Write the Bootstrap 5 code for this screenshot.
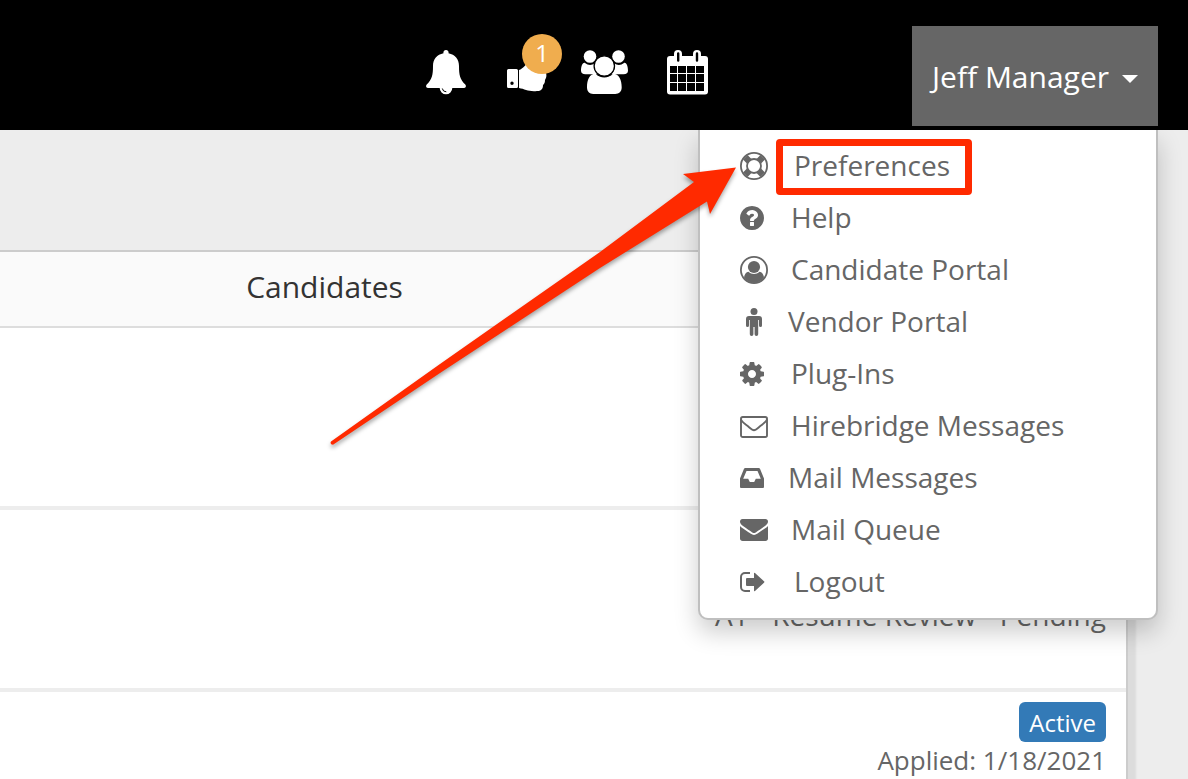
<!DOCTYPE html>
<html lang="en">
<head>
<meta charset="utf-8">
<meta name="viewport" content="width=device-width, initial-scale=1">
<title>Hirebridge</title>
<link href="https://cdn.jsdelivr.net/npm/bootstrap@5.3.0/dist/css/bootstrap.min.css" rel="stylesheet">
<style>
  body { font-family: "Open Sans", "Noto Sans", sans-serif; background: #ededed; color: #666; font-size: 26px; line-height: 37px; }
  .topbar { flex: none; background: #000; height: 130px; padding: 26px 30px 4px 0; z-index: 10; }
  .tools { gap: 32px; margin-right: 203px; }
  .tool { width: 48px; height: 48px; border: 0; background: none; padding: 0; color: #fff; display: block; position: relative; }
  .tool svg, .item-icon svg { display: block; fill: currentColor; overflow: visible; }
  .count { position: absolute; top: -16px; left: 21px; width: 40px; height: 40px; border-radius: 50%; background: #f0ad4e; color: #fff; font-size: 24px; line-height: 38px; text-align: center; }
  .user-btn { background: #666; color: #fff; border: 0; border-radius: 0; height: 100px; padding: 2px 20px 0; font-size: 30px; line-height: 40px; gap: 13px; }
  .user-btn:hover, .user-btn:focus { background: #666; color: #fff; }
  .caret { border: 8px solid transparent; border-top-color: #fff; border-bottom: 0; margin-top: 4px; }
  .user-menu { position: absolute; top: 130px; right: 30px; width: 460px; margin: 0; padding: 10px 0; border: 2px solid #bfbfbf; border-top: 0; border-radius: 0 0 10px 10px; background: #fff; box-shadow: 0 12px 24px rgba(0,0,0,.2); font-size: 28px; line-height: 40px; list-style: none; clip-path: inset(0 -60px -60px -60px); }
  .user-menu a { display: flex; align-items: center; height: 52px; padding: 0 40px; color: #666; text-decoration: none; white-space: nowrap; }
  .item-text { padding-bottom: 2px; }
  .item-icon { flex: none; width: 51px; }
  .slot-narrow { width: 48px; }
  .slot-wide { width: 54px; }
  .callout { position: relative; }
  .callout::after { content: ""; position: absolute; inset: -6px -22px -8px -18px; border: 7px solid #ff2a00; border-radius: 4px; }
  .pointer { position: absolute; top: 160px; right: 448px; width: 412px; height: 290px; fill: #ff2a00; filter: drop-shadow(0 3px 2px rgba(0,0,0,.35)); pointer-events: none; }
  .panel { flex: 1 1 0; min-height: 0; overflow: hidden; margin: 120px 60px 0 0; background: #fff; border: solid #ccc; border-width: 2px 2px 0 0; box-shadow: 8px 8px 2px #dcdcdc; }
  .grid { width: 100%; table-layout: fixed; border-collapse: separate; border-spacing: 0; }
  .grid thead > tr > * { height: 76px; background: #fafafa; border-bottom: 2px solid #ddd; color: #333; font-size: 30px; line-height: 40px; font-weight: 400; text-align: center; padding: 0 4px 4px 0; }
  .grid tbody td { height: 182px; border-bottom: 4px solid #ededed; padding: 10px 20px 0; text-align: right; vertical-align: top; }
  .grid tbody td.stage { vertical-align: bottom; padding-bottom: 54px; font-size: 28px; }
  .name-col { width: 58%; }
  .status { display: block; width: fit-content; margin-left: auto; background: #337ab7; color: #fff; border-radius: 6px; padding: 2px 10px 0; font-size: 24px; line-height: 38px; }
</style>
</head>
<body class="vh-100 overflow-hidden d-flex flex-column">
<header class="topbar d-flex justify-content-end align-items-start position-relative">
  <nav class="tools d-flex align-items-center pt-4" aria-label="Tools">
    <button class="tool" type="button" aria-label="Notifications">
      <svg width="48" height="48" viewBox="0 0 48 48"><path d="M25 0a2.500 2.500 0 0 1 2.500 3.200C34 4.500 38 9 38 16c0 9 1 13.500 6.300 18.500 1.300 1.500.7 3.500-1.600 3.500H31.300a6.300 6.300 0 0 1-12.600 0H7.300c-2.300 0-2.900-2-1.600-3.500C11 29.500 12 25 12 16c0-7 4-11.500 10.500-12.800A2.500 2.500 0 0 1 25 0z"/><path d="M21.300 38.500a4 4 0 0 0 4 3.300" fill="none" stroke="#000" stroke-width="1"/></svg>
    </button>
    <button class="tool" type="button" aria-label="Approvals, 1 new">
      <svg width="48" height="48" viewBox="0 0 48 48"><path fill-rule="evenodd" d="M7.500 19h8a1.500 1.500 0 0 1 1.500 1.500v16a1.500 1.500 0 0 1-1.500 1.500h-8A1.500 1.500 0 0 1 6 36.500v-16A1.500 1.500 0 0 1 7.500 19zM11 31.500a1.700 1.700 0 1 0 0 3.400 1.700 1.700 0 0 0 0-3.400z"/><path d="M18 20c4-1 7-6 11-10 2-3 2-8 5-8 6 0 6 8 3 14h5c4 0 5 4 3 7 1 3 0 5-1 7 0 3-1 4-2 5 0 4-2 6-6 6-8 1-12-2-18-3z"/></svg>
      <span class="count">1</span>
    </button>
    <button class="tool" type="button" aria-label="Candidates">
      <svg width="48" height="48" viewBox="0 0 48 48"><circle cx="9" cy="6.500" r="6.300"/><circle cx="37.500" cy="6.500" r="6.300"/><path d="M4 13c3 2.500 7 2.500 9.500.3a11.500 11.500 0 0 0 3.300 11H4.500C1.500 24.300 0 23 0 20.500 0 17 1.500 12 4 13zM43 13c-3 2.500-7 2.500-9.500.3a11.500 11.500 0 0 1-3.300 11h12.300c3 0 4.500-1.300 4.500-3.800 0-3.500-1.500-8.500-4-7.500z"/><path d="M14.500 23.800c5 5 12.500 5 17.500 0 6 0 8.700 6 8.700 13.500 0 4.500-2.700 6.700-6.500 6.700h-22C8.700 44 6 41.800 6 37.300c0-7.500 2.500-13.500 8.500-13.500z"/><circle cx="23.300" cy="16" r="10.200" stroke="#000" stroke-width="1.300"/></svg>
    </button>
    <button class="tool" type="button" aria-label="Calendar">
      <svg width="48" height="48" viewBox="0 0 48 48"><rect x="6" y="6" width="41" height="38.500" rx="3"/><rect x="13" y="0" width="8" height="13" rx="4"/><rect x="32" y="0" width="8" height="13" rx="4"/><path fill="#000" d="M16 3.500a1.200 1.200 0 0 1 2.400 0v7a1.200 1.200 0 0 1-2.400 0zM34.800 3.500a1.200 1.200 0 0 1 2.400 0v7a1.200 1.200 0 0 1-2.400 0zM9 16h7v7H9zm8 0h8v7h-8zm9 0h8v7h-8zm9 0h8v7h-8zM9 24h7v8H9zm8 0h8v8h-8zm9 0h8v8h-8zm9 0h8v8h-8zM9 33h7v8H9zm8 0h8v8h-8zm9 0h8v8h-8zm9 0h8v8h-8z"/></svg>
    </button>
  </nav>
  <button class="btn user-btn d-flex align-items-center" type="button" aria-expanded="true" aria-controls="userMenu">Jeff Manager<span class="caret"></span></button>
  <ul class="user-menu" id="userMenu">
    <li><a href="#"><span class="item-icon slot-wide"><svg width="28" height="28" viewBox="0 0 28 28"><g fill="none" stroke="currentColor"><circle cx="14" cy="14" r="13.100" stroke-width="1.800"/><circle cx="14" cy="14" r="7" stroke-width="1.800"/><path stroke-width="6.400" d="M5.300 5.300l3.900 3.900M22.700 5.300l-3.900 3.900M5.300 22.700l3.900-3.900M22.700 22.700l-3.900-3.900"/></g></svg></span><span class="item-text callout">Preferences</span></a></li>
    <li><a href="#"><span class="item-icon"><svg width="24" height="24" viewBox="128 128 1536 1536"><path d="M1024 1376v-192q0-14-9-23t-23-9h-192q-14 0-23 9t-9 23v192q0 14 9 23t23 9h192q14 0 23-9t9-23zm256-672q0-88-55.500-163t-138.500-116-170-41q-243 0-371 213-15 24 8 42l132 100q7 6 19 6 16 0 25-12 53-68 86-92 34-24 86-24 48 0 85.500 26t37.500 59q0 38-20 61t-68 45q-63 28-115.500 86.500t-52.500 125.500v36q0 14 9 23t23 9h192q14 0 23-9t9-23q0-19 21.500-49.500t54.500-49.500q32-18 49-28.500t46-35 44.500-48 28-60.500 12.500-81zm384 192q0 209-103 385.500t-279.500 279.500-385.500 103-385.500-103-279.500-279.500-103-385.500 103-385.500 279.500-279.500 385.500-103 385.500 103 279.500 279.500 103 385.500z"/></svg></span><span class="item-text">Help</span></a></li>
    <li><a href="#"><span class="item-icon"><svg width="28" height="28" viewBox="0 0 28 28"><circle cx="14" cy="14" r="13.100" fill="none" stroke="currentColor" stroke-width="1.800"/><circle cx="14" cy="11" r="6.100"/><path d="M8.500 15.800c3 3 8 3 11 0 2.500.4 4 2.500 4.500 5.700A12.800 12.800 0 0 1 14 27a12.800 12.800 0 0 1-10-5.500c.5-3.200 2-5.300 4.500-5.700z"/></svg></span><span class="item-text">Candidate Portal</span></a></li>
    <li><a href="#"><span class="item-icon slot-narrow"><svg width="28" height="28" viewBox="0 0 28 28"><circle cx="14" cy="3.500" r="3.500"/><path d="M9 8h10a3 3 0 0 1 3 3v6.500a1.500 1.500 0 0 1-3 0V12h-.8v14.300a1.800 1.800 0 0 1-3.600 0V19h-1.200v7.300a1.800 1.800 0 0 1-3.600 0V12H9v5.500a1.500 1.500 0 0 1-3 0V11a3 3 0 0 1 3-3z"/></svg></span><span class="item-text">Vendor Portal</span></a></li>
    <li><a href="#"><span class="item-icon"><svg width="24" height="24" viewBox="128 128 1536 1536"><path d="M1152 896q0-106-75-181t-181-75-181 75-75 181 75 181 181 75 181-75 75-181zm512-109v222q0 12-8 23t-20 13l-185 28q-19 54-39 91 35 50 107 138 10 12 10 25t-9 23q-27 37-99 108t-94 71q-12 0-26-9l-138-108q-44 23-91 38-16 136-29 186-7 28-36 28h-222q-14 0-24.500-8.500t-11.500-21.500l-28-184q-49-16-90-37l-141 107q-10 9-25 9-14 0-25-11-126-114-165-168-7-10-7-23 0-12 8-23 15-21 51-66.500t54-70.500q-27-50-41-99l-183-27q-13-2-21-12.500t-8-23.500v-222q0-12 8-23t19-13l186-28q14-46 39-92-40-57-107-138-10-12-10-24 0-10 9-23 26-36 98.500-107.500t94.500-71.500q13 0 26 10l138 107q44-23 91-38 16-136 29-186 7-28 36-28h222q14 0 24.500 8.500t11.500 21.500l28 184q49 16 90 37l142-107q9-9 24-9 13 0 25 10 129 119 165 170 7 8 7 22 0 12-8 23-15 21-51 66.500t-54 70.500q26 50 41 98l183 28q13 2 21 12.500t8 23.500z"/></svg></span><span class="item-text">Plug-Ins</span></a></li>
    <li><a href="#"><span class="item-icon"><svg width="28" height="24" viewBox="0 0 28 24"><g fill="none" stroke="currentColor" stroke-width="1.900"><rect x="1" y="3" width="26" height="20" rx="1.800"/><path d="M1 5.500c1 2.500 3 3.800 6 6 3 2.300 5 4.700 7 4.700s4-2.400 7-4.700c3-2.200 5-3.500 6-6"/></g></svg></span><span class="item-text">Hirebridge Messages</span></a></li>
    <li><a href="#"><span class="item-icon slot-narrow"><svg width="24" height="20" viewBox="0 0 24 20"><path fill-rule="evenodd" d="M5.300 0h13.400q1 0 1.400 1l3.900 9.500V19q0 1-1 1H1q-1 0-1-1v-8.500L3.900 1q.4-1 1.400-1zM6.500 3 3.200 10.800h5l1.600 3.200h4.400l1.600-3.200h5L17.500 3z"/></svg></span><span class="item-text">Mail Messages</span></a></li>
    <li><a href="#"><span class="item-icon"><svg width="28" height="22" viewBox="0 256 1792 1408"><path d="M1792 710v794q0 66-47 113t-113 47h-1472q-66 0-113-47t-47-113v-794q44 49 101 87 362 246 497 345 57 42 92.500 65.500t94.500 48 110 24.500h2q51 0 110-24.500t94.500-48 92.500-65.500q170-123 498-345 57-39 100-87zm0-294q0 79-49 151t-122 123q-376 261-468 325-10 7-42.500 31t-54 38.500-52 32.500-57.500 27-50 9h-2q-23 0-50-9t-57.500-27-52-32.500-54-38.500-42.500-31q-91-64-262-182.500t-205-142.500q-62-42-117-115.500t-55-136.500q0-78 41.500-130t118.500-52h1472q65 0 112.500 47t47.500 113z"/></svg></span><span class="item-text">Mail Queue</span></a></li>
    <li><a href="#"><span class="item-icon slot-wide"><svg width="25" height="20" viewBox="0 0 25 20"><path d="M10 1H5a4 4 0 0 0-4 4v10a4 4 0 0 0 4 4h5" fill="none" stroke="currentColor" stroke-width="2"/><path d="M7 6h7V1.500q0-1.300 1-.5l9 8.300q.8.700 0 1.400l-9 8.300q-1 .8-1-.5V14H7q-1 0-1-1V7q0-1 1-1z"/></svg></span><span class="item-text">Logout</span></a></li>
  </ul>
  <svg class="pointer" viewBox="328 160 412 290" aria-hidden="true"><path d="M736 167.500 683 174l11 8L600 252 440 364 331 441.500q-1.500 3 2 3.200L440 373l160-105 107-66.500 3 12.500z"/></svg>
</header>
<main class="panel">
  <table class="grid">
    <thead><tr><th class="name-col" scope="col">Candidates</th><td></td></tr></thead>
    <tbody>
      <tr><td></td><td></td></tr>
      <tr><td></td><td class="stage">A1 - Resume Review - Pending</td></tr>
      <tr><td></td><td><span class="status">Active</span>Applied: 1/18/2021</td></tr>
    </tbody>
  </table>
</main>
<script src="https://cdn.jsdelivr.net/npm/bootstrap@5.3.0/dist/js/bootstrap.bundle.min.js"></script>
</body>
</html>
